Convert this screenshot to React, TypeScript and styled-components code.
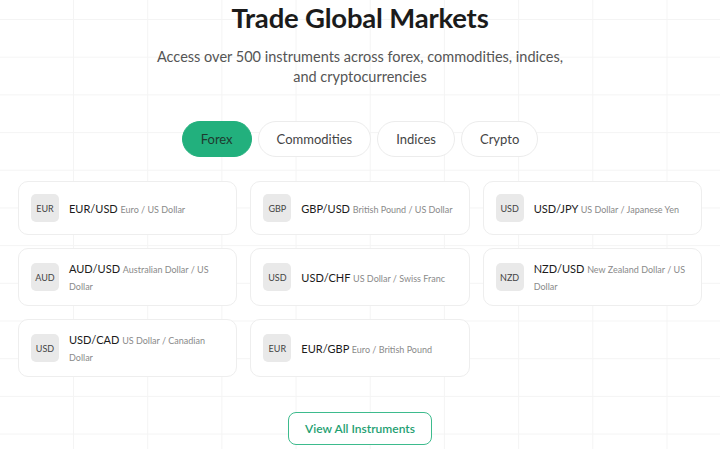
import { useState } from "react";
import styled, { createGlobalStyle } from "styled-components";

const GlobalStyle = createGlobalStyle`
  html, body {
    margin: 0;
    padding: 0;
    background: #ffffff;
  }
  body {
    font-family: "Lato", "Inter", "Liberation Sans", sans-serif;
    color: #1a1a1a;
  }
`;

type Pair = {
  base: string;
  symbol: string;
  name: string;
};

const pairs: Pair[] = [
  { base: "EUR", symbol: "EUR/USD", name: "Euro / US Dollar" },
  { base: "GBP", symbol: "GBP/USD", name: "British Pound / US Dollar" },
  { base: "USD", symbol: "USD/JPY", name: "US Dollar / Japanese Yen" },
  { base: "AUD", symbol: "AUD/USD", name: "Australian Dollar / US Dollar" },
  { base: "USD", symbol: "USD/CHF", name: "US Dollar / Swiss Franc" },
  { base: "NZD", symbol: "NZD/USD", name: "New Zealand Dollar / US Dollar" },
  { base: "USD", symbol: "USD/CAD", name: "US Dollar / Canadian Dollar" },
  { base: "EUR", symbol: "EUR/GBP", name: "Euro / British Pound" },
];

const tabs = ["Forex", "Commodities", "Indices", "Crypto"];

export default function App() {
  const [active, setActive] = useState("Forex");

  return (
    <>
      <GlobalStyle />
      <Page>
        <Title>Trade Global Markets</Title>
        <Subtitle>
          Access over 500 instruments across forex, commodities, indices,
          <br />
          and cryptocurrencies
        </Subtitle>
        <Tabs>
          {tabs.map((t) => (
            <Tab key={t} $active={t === active} onClick={() => setActive(t)}>
              {t}
            </Tab>
          ))}
        </Tabs>
        <Grid>
          {pairs.map((p) => (
            <Card key={p.symbol}>
              <Badge>{p.base}</Badge>
              <Info>
                <Symbol>{p.symbol}</Symbol> <Name>{p.name}</Name>
              </Info>
            </Card>
          ))}
        </Grid>
        <Footer>
          <OutlineButton>View All Instruments</OutlineButton>
        </Footer>
      </Page>
    </>
  );
}

const Page = styled.div`
  width: 720px;
  height: 449px;
  box-sizing: border-box;
  overflow: hidden;
  padding: 2px 18px 0 18px;
  display: flex;
  flex-direction: column;
  align-items: center;
  background-color: #ffffff;
  background-image: linear-gradient(to right, #f4f4f4 1px, transparent 1px),
    linear-gradient(to bottom, #f4f4f4 1px, transparent 1px);
  background-size: 74.2px 37.7px;
  background-position: 73px 19px;
`;

const Title = styled.h1`
  margin: 0;
  font-size: 27.5px;
  line-height: 32px;
  font-weight: 700;
  color: #1b1b1b;
  letter-spacing: -0.2px;
`;

const Subtitle = styled.p`
  margin: 13px 0 0 0;
  font-size: 14.5px;
  line-height: 20px;
  color: #555555;
  text-align: center;
`;

const Tabs = styled.div`
  margin-top: 34px;
  display: flex;
  gap: 6px;
`;

const Tab = styled.button<{ $active?: boolean }>`
  height: 36px;
  padding: 0 18px;
  border-radius: 18px;
  border: 1px solid ${(p) => (p.$active ? "#22b07d" : "#ececec")};
  background: ${(p) => (p.$active ? "#22b07d" : "#ffffff")};
  color: ${(p) => (p.$active ? "#1e3b2f" : "#444444")};
  font-family: inherit;
  font-size: 13px;
  cursor: pointer;
`;

const Grid = styled.div`
  margin-top: 24px;
  width: 100%;
  display: grid;
  grid-template-columns: repeat(3, 1fr);
  gap: 13px;
`;

const Card = styled.div`
  box-sizing: border-box;
  min-height: 54px;
  padding: 11px 12px;
  border: 1px solid #eeeeee;
  border-radius: 10px;
  background: #ffffff;
  display: flex;
  align-items: center;
  gap: 10px;
`;

const Badge = styled.div`
  flex: none;
  width: 28px;
  height: 28px;
  border-radius: 5px;
  background: #e9e9e9;
  display: flex;
  align-items: center;
  justify-content: center;
  font-size: 9px;
  color: #444444;
`;

const Info = styled.div`
  font-size: 11px;
  line-height: 17px;
`;

const Symbol = styled.span`
  color: #1b1b1b;
`;

const Name = styled.span`
  font-size: 9px;
  line-height: 1;
  color: #8a8a8a;
`;

const Footer = styled.div`
  margin-top: 35px;
`;

const OutlineButton = styled.button`
  width: 144px;
  height: 33px;
  border: 1.5px solid #3dbb8d;
  border-radius: 8px;
  background: #ffffff;
  color: #1f9f72;
  font-family: inherit;
  font-size: 12px;
  font-weight: 600;
  cursor: pointer;
`;
